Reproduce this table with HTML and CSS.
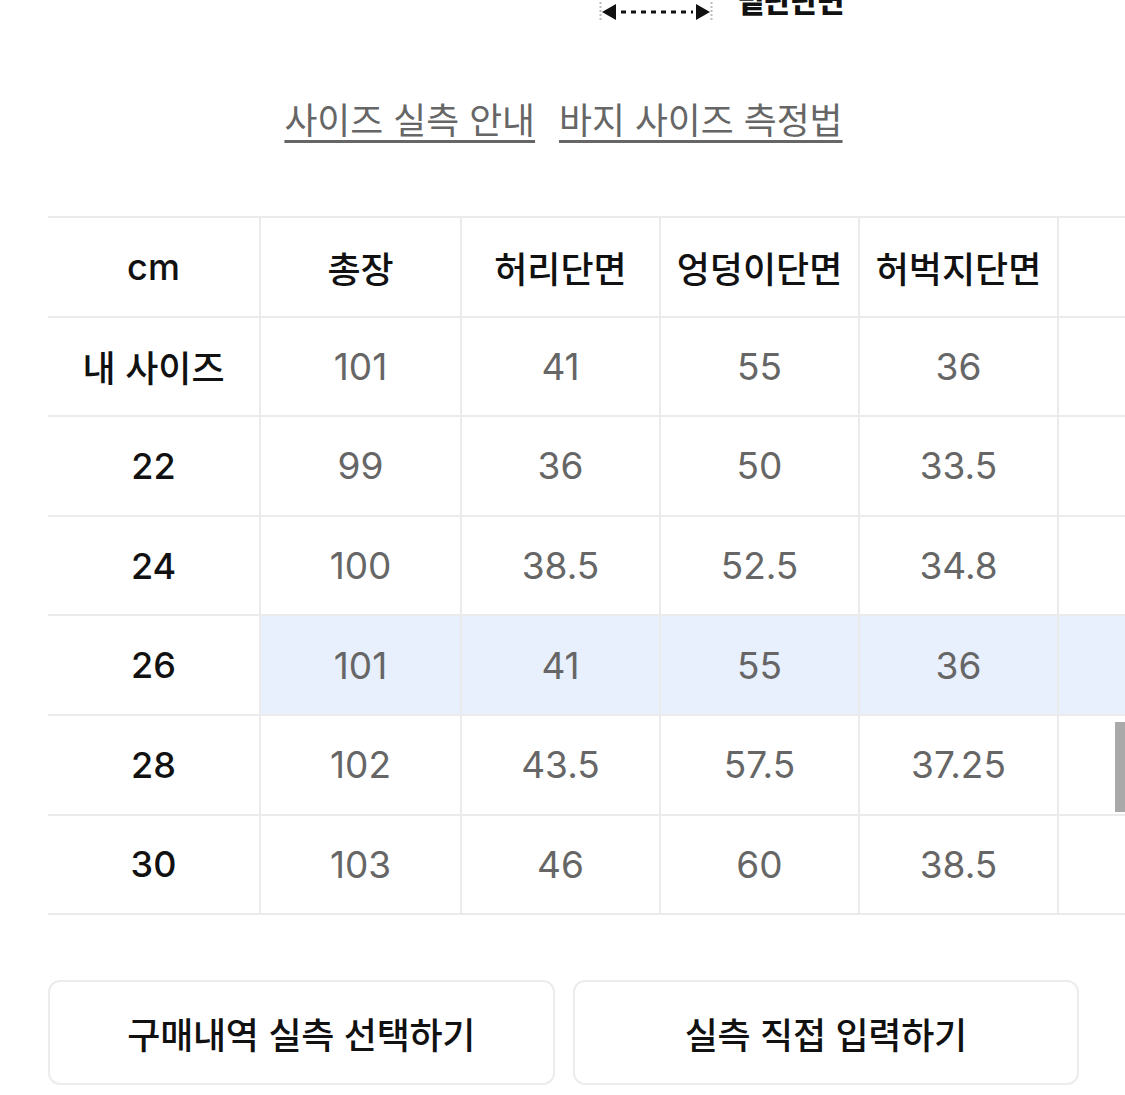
FILE: index.html
```html
<!DOCTYPE html>
<html lang="ko">
<head>
<meta charset="utf-8">
<title>사이즈</title>
<link rel="stylesheet" href="styles.css">
</head>
<body>
<div class="page">
  <div class="diagram">
    <svg class="arrow" width="114" height="22" viewBox="0 0 114 22">
      <line x1="1.5" y1="2" x2="1.5" y2="20" stroke="#bbb" stroke-width="2" stroke-dasharray="2 2"/>
      <line x1="112.5" y1="2" x2="112.5" y2="20" stroke="#bbb" stroke-width="2" stroke-dasharray="2 2"/>
      <polygon points="3,12 17,4 17,20" fill="#111"/>
      <polygon points="111,12 97,4 97,20" fill="#111"/>
      <line x1="22" y1="12" x2="94" y2="12" stroke="#111" stroke-width="3" stroke-dasharray="5 5"/>
    </svg>
    <span class="dlabel">밑단단면</span>
  </div>

  <div class="links">
    <a class="link" href="#">사이즈 실측 안내</a>
    <a class="link" href="#">바지 사이즈 측정법</a>
  </div>

  <div class="scroller">
    <table class="size-table">
      <colgroup>
        <col class="c0"><col class="c1"><col class="c2"><col class="c3"><col class="c4"><col class="c5">
      </colgroup>
      <thead>
        <tr><th>cm</th><th>총장</th><th>허리단면</th><th>엉덩이단면</th><th>허벅지단면</th><th></th></tr>
      </thead>
      <tbody>
        <tr><th>내 사이즈</th><td>101</td><td>41</td><td>55</td><td>36</td><td></td></tr>
        <tr><th>22</th><td>99</td><td>36</td><td>50</td><td>33.5</td><td></td></tr>
        <tr><th>24</th><td>100</td><td>38.5</td><td>52.5</td><td>34.8</td><td></td></tr>
        <tr class="hl"><th>26</th><td>101</td><td>41</td><td>55</td><td>36</td><td></td></tr>
        <tr><th>28</th><td>102</td><td>43.5</td><td>57.5</td><td>37.25</td><td></td></tr>
        <tr><th>30</th><td>103</td><td>46</td><td>60</td><td>38.5</td><td></td></tr>
      </tbody>
    </table>
    <div class="scrollbar"></div>
  </div>

  <div class="buttons">
    <button class="btn">구매내역 실측 선택하기</button>
    <button class="btn">실측 직접 입력하기</button>
  </div>
</div>
</body>
</html>
```

FILE: styles.css
```css
html, body {
  margin: 0;
  padding: 0;
  background: #fff;
}
body {
  font-family: Inter, "Noto Sans CJK KR", sans-serif;
  color: #111;
  overflow: hidden;
}
.page {
  padding-left: 48px;
  width: 1077px;
}
.diagram {
  height: 22px;
  display: flex;
  align-items: flex-start;
  padding-left: 551px;
  overflow: hidden;
}
.arrow {
  display: block;
}
.dlabel {
  margin-left: 24px;
  font-family: "Noto Sans CJK KR", sans-serif;
  font-weight: 900;
  font-size: 30px;
  line-height: 30px;
  margin-top: -16px;
  color: #111;
  letter-spacing: -1px;
}
.links {
  width: 1031px;
  margin-top: 76px;
  display: flex;
  justify-content: center;
  gap: 24px;
  height: 44px;
}
.link {
  font-family: "Noto Sans CJK KR", sans-serif;
  font-size: 35.8px;
  line-height: 40px;
  color: #666;
  text-decoration: underline;
  text-decoration-thickness: 3px;
  text-underline-offset: 6px;
}
.scroller {
  position: relative;
  margin-top: 74px;
  overflow: hidden;
  width: 1077px;
}
.size-table {
  border-collapse: collapse;
  table-layout: fixed;
  width: 1210px;
}
.c0 { width: 212px; }
.c1 { width: 201px; }
.c2 { width: 199px; }
.c3 { width: 199px; }
.c4 { width: 199px; }
.c5 { width: 200px; }
.size-table th,
.size-table td {
  height: 97.6px;
  padding: 0;
  text-align: center;
  vertical-align: middle;
  border: 2px solid #ebebeb;
  font-size: 37px;
  white-space: nowrap;
}
.size-table tr > :first-child { border-left: none; }
.size-table thead th {
  font-weight: 500;
  font-size: 36px;
  color: #111;
}
.size-table tbody th {
  font-weight: 500;
  font-size: 36px;
  color: #111;
}
.size-table tbody td {
  font-weight: 400;
  color: #666;
}
.size-table tr.hl td {
  background: #e8effd;
}
.scrollbar {
  position: absolute;
  right: 0;
  top: 506px;
  width: 10px;
  height: 90px;
  background: #a9a9a9;
}
.buttons {
  width: 1031px;
  margin-top: 65px;
  display: flex;
  gap: 18px;
}
.btn {
  flex: 1;
  height: 105px;
  background: #fff;
  border: 2px solid #ececec;
  border-radius: 12px;
  font-family: "Noto Sans CJK KR", sans-serif;
  font-size: 36px;
  font-weight: 500;
  color: #111;
  letter-spacing: -0.3px;
  padding: 0;
}
```
